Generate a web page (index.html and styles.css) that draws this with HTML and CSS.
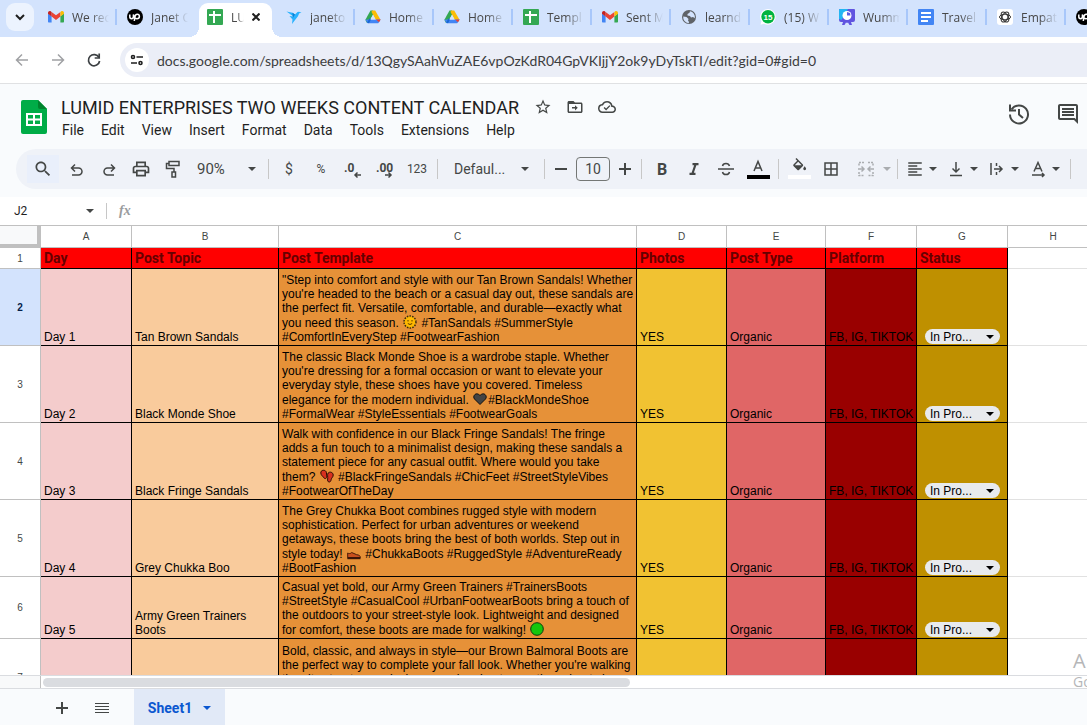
FILE: index.html
```html
<!DOCTYPE html>
<html lang="en">
<head>
	<meta charset="UTF-8">
	<title>LUMID ENTERPRISES TWO WEEKS CONTENT CALENDAR</title>
	<link rel="stylesheet" href="styles.css">
</head>
<body>
	<!-- icons that are used more than once -->
	<svg class="defs" width="0" height="0">
		<symbol id="gmail" viewBox="0 0 16 16">
			<path fill="#4285f4" d="M1 13.5h2.6V7.3L0 4.6v7.9c0 .6.4 1 1 1z"/>
			<path fill="#34a853" d="M12.4 13.5H15c.6 0 1-.4 1-1V4.6l-3.6 2.7z"/>
			<path fill="#ea4335" d="M3.6 7.6V2.9L8 6.2l4.4-3.3v4.7L8 10.9z"/>
			<path fill="#c5221f" d="M0 4v.8l3.6 2.8V2.9l-.9-.6C1.600 1.400 0 2.400 0 4z"/>
			<path fill="#fbbc04" d="M12.400 2.900v4.700L16 4.800V4c0-1.600-1.600-2.600-2.700-1.700z"/>
		</symbol>
		<symbol id="drive" viewBox="0 0 16 16">
			<path fill="#34a853" d="M5.500 1.500h2.600L8 5.800 3.700 13.500 1.500 13.500.4 10.800z"/>
			<path fill="#fbbc04" d="M7 1.500h3.200l5.300 9.200h-4.800L6.500 3z"/>
			<path fill="#4285f4" d="M2.700 10.400h12.900l-2 3.300c-.2.400-.6.600-1 .600H3.400c-.5 0-.9-.2-1.100-.6L.4 10.800z"/>
			<path fill="#1967d2" d="M2 13.500l2.800-4.600 1.200 1.700-2 3.600z"/>
			<path fill="#ea4335" d="M11 10.500h4.600l-1.600 2.800z"/>
			<path fill="#d3e3fd" d="M8 5.800l2.600 4.600H5.400z"/>
		</symbol>
		<symbol id="sheet" viewBox="0 0 16 16">
			<rect width="16" height="16" rx="1" fill="#34a853"/>
			<path fill="#fff" d="M2 5h12v2H8v7H6V7H2zM6 2h2v3H6z"/>
		</symbol>
		<symbol id="upwork" viewBox="0 0 16 16">
			<circle cx="8" cy="8" r="8" fill="#000"/>
			<path fill="none" stroke="#fff" stroke-width="1.500" d="M2.800 5.500v2.300c0 1.200.7 1.900 1.800 1.900s1.800-.7 1.800-1.900V5.500c.5 2 1.600 4.200 3.600 4.200 1.400 0 2.400-1 2.400-2.200s-.9-2.200-2.200-2.200c-1.500 0-2 1.200-2.400 2.900L7.300 12"/>
		</symbol>
	</svg>

	<div class="tabs">
		<button class="tabsearch" aria-label="Search tabs"><svg width="12" height="12" viewBox="0 0 12 12"><path fill="none" stroke="#1f1f1f" stroke-width="2" d="M2 4l4 4 4-4"/></svg></button>
		<div class="tab"><svg class="fav"><use href="#gmail"/></svg><span>We rec</span></div>
		<div class="tab nosep"><svg class="fav"><use href="#upwork"/></svg><span>Janet C</span></div>
		<div class="tab active">
			<svg class="fav"><use href="#sheet"/></svg><span>LU</span>
			<button class="close" aria-label="Close tab"><svg width="8" height="8" viewBox="0 0 8 8"><path stroke="#1f1f1f" stroke-width="2" d="M.5.500l7 7M7.500.500l-7 7"/></svg></button>
		</div>
		<div class="tab"><svg class="fav" viewBox="0 0 16 16"><path fill="#29b2fe" d="M.5 2.500l6 1.200L9 5.500 11.500 3l1.500-.3 2.500 1-2.200.6-1.500 3.200-2 2.500L6 15l.5-4.500L3.500 7l4 .5z"/><path fill="#0b7fd0" d="M6.500 3.700L9 5.500 6.800 9z"/></svg><span>janeto</span></div>
		<div class="tab"><svg class="fav"><use href="#drive"/></svg><span>Home</span></div>
		<div class="tab"><svg class="fav"><use href="#drive"/></svg><span>Home</span></div>
		<div class="tab"><svg class="fav"><use href="#sheet"/></svg><span>Templ</span></div>
		<div class="tab"><svg class="fav"><use href="#gmail"/></svg><span>Sent M</span></div>
		<div class="tab"><svg class="fav" viewBox="0 0 16 16"><circle cx="8" cy="8" r="7" fill="#5f6368"/><path fill="#d3e3fd" d="M2.200 7.500L5.500 8l2 2-.5 1.500 1 1.500-.3 1.200A6 6 0 0 1 2.200 7.500zM9 2.200l-.5 1.500L6.500 5v1.500l2.500.5 1 1.500 2-.5 1.800 1.200A6 6 0 0 0 9 2.200z"/></svg><span>learnd</span></div>
		<div class="tab"><svg class="fav" viewBox="0 0 16 16"><path fill="#fff" d="M8 0a7.800 7.800 0 1 1-3.800 14.700L.5 15.700l1-3.600A7.800 7.800 0 0 1 8 0z"/><circle cx="8" cy="7.800" r="6.700" fill="#00b341"/><text x="8" y="11" class="badge">15</text></svg><span>(15) W</span></div>
		<div class="tab"><svg class="fav" viewBox="0 0 16 16"><path fill="#6054e0" d="M1 0h14a1 1 0 0 1 1 1v10a2 2 0 0 1-2 2h-2l1 3h-2.500L9 13.500 8 14l-1-.5L5.500 16H3l1-3H2a2 2 0 0 1-2-2V1a1 1 0 0 1 1-1z"/><path fill="#23b5f2" d="M1 0h8L2.500 11 0 10V1a1 1 0 0 1 1-1z"/><circle cx="8" cy="6.500" r="4.500" fill="#fff"/><path fill="#5a5ce4" d="M8 6.500V3l3 1 .5 2.500z"/></svg><span>Wumm</span></div>
		<div class="tab"><svg class="fav" viewBox="0 0 16 16"><rect width="16" height="16" rx="1" fill="#4285f4"/><path fill="#fff" d="M3 3h10v2H3zM3 7h10v2H3zM3 11h7v2H3z"/></svg><span>Travel</span></div>
		<div class="tab"><svg class="fav" viewBox="0 0 16 16"><rect width="16" height="16" rx="3" fill="#fff"/><g fill="none" stroke="#333" stroke-width="1"><ellipse cx="8" cy="8" rx="5.500" ry="2.800"/><ellipse cx="8" cy="8" rx="5.500" ry="2.800" transform="rotate(60 8 8)"/><ellipse cx="8" cy="8" rx="5.500" ry="2.800" transform="rotate(120 8 8)"/></g></svg><span>Empat</span></div>
		<div class="tab"><svg class="fav"><use href="#upwork"/></svg></div>
	</div>

	<div class="address">
		<button class="nav" aria-label="Back"><svg width="16" height="16" viewBox="0 0 16 16"><path fill="none" stroke="#a0a1a4" stroke-width="1.500" d="M14 8H3M8 2.500L2.500 8 8 13.500"/></svg></button>
		<button class="nav" aria-label="Forward"><svg width="16" height="16" viewBox="0 0 16 16"><path fill="none" stroke="#a0a1a4" stroke-width="1.500" d="M2 8h11M8 2.500L13.500 8 8 13.500"/></svg></button>
		<button class="nav" aria-label="Reload"><svg width="16" height="16" viewBox="0 0 16 16"><path fill="none" stroke="#3c4043" stroke-width="1.700" d="M13 5.500A5.600 5.600 0 1 0 13.600 9"/><path fill="none" stroke="#3c4043" stroke-width="1.700" d="M13.200 1.500V6H8.700"/></svg></button>
		<div class="omnibox">
			<button class="siteinfo" aria-label="Site information"><svg width="14" height="14" viewBox="0 0 14 14"><g fill="none" stroke="#1f1f1f" stroke-width="1.600"><circle cx="3" cy="4" r="1.500"/><path d="M6.500 4H13M1 10h6"/><circle cx="10.500" cy="10" r="1.500"/></g></svg></button>
			<input type="text" class="url" aria-label="Address" value="docs.google.com/spreadsheets/d/13QgySAahVuZAE6vpOzKdR04GpVKIjjY2ok9yDyTskTI/edit?gid=0#gid=0">
		</div>
	</div>

	<div class="header">
		<svg class="logo" width="26" height="34" viewBox="0 0 26 34"><path fill="#00ac47" d="M2 0h15l9 9v23a2 2 0 0 1-2 2H2a2 2 0 0 1-2-2V2a2 2 0 0 1 2-2z"/><path fill="#00832d" d="M17 0l9 9h-7a2 2 0 0 1-2-2z"/><path fill="#fff" d="M5 13h16v13H5zM7 15v3.500h5V15zm7 0v3.500h5V15zm-7 5.500V24h5v-3.500zm7 0V24h5v-3.500z" fill-rule="evenodd"/></svg>
		<div class="heading">
			<div class="titlerow">
				<input type="text" class="title" aria-label="Rename" value="LUMID ENTERPRISES TWO WEEKS CONTENT CALENDAR">
				<button class="ticon" aria-label="Star"><svg width="18" height="18" viewBox="0 0 24 24"><path d="M22 9.240l-7.190-.620L12 2 9.190 8.630 2 9.240l5.460 4.730L5.820 21 12 17.270 18.180 21l-1.630-7.030L22 9.240zM12 15.400l-3.760 2.270 1-4.280-3.320-2.880 4.380-.380L12 6.100l1.710 4.040 4.380.380-3.320 2.880 1 4.280L12 15.400z"/></svg></button>
				<button class="ticon" aria-label="Move"><svg width="18" height="18" viewBox="0 0 24 24"><path d="M20 6h-8l-2-2H4c-1.100 0-2 .9-2 2v12c0 1.100.9 2 2 2h16c1.100 0 2-.9 2-2V8c0-1.100-.9-2-2-2zm0 12H4V8h16v10z"/><path d="M12 9.500l3.700 3.500-3.700 3.500V14H8v-2h4z"/></svg></button>
				<button class="ticon" aria-label="Document status"><svg width="18" height="18" viewBox="0 0 24 24"><path d="M19.350 10.040A7.490 7.490 0 0 0 12 4C9.110 4 6.600 5.640 5.350 8.040A5.994 5.994 0 0 0 0 14c0 3.310 2.690 6 6 6h13c2.760 0 5-2.240 5-5 0-2.640-2.050-4.780-4.650-4.960zM19 18H6c-2.210 0-4-1.790-4-4 0-2.050 1.530-3.760 3.560-3.970l1.070-.110.5-.950A5.469 5.469 0 0 1 12 6c2.620 0 4.880 1.860 5.390 4.430l.3 1.500 1.530.110A2.980 2.980 0 0 1 22 15c0 1.650-1.350 3-3 3z"/><path d="M10.800 16.500l-3.300-3.300 1.300-1.300 2 2 4.400-4.400 1.300 1.300z"/></svg></button>
			</div>
			<div class="menu">
				<button>File</button>
				<button>Edit</button>
				<button>View</button>
				<button>Insert</button>
				<button>Format</button>
				<button>Data</button>
				<button>Tools</button>
				<button>Extensions</button>
				<button>Help</button>
			</div>
		</div>
		<div class="actions">
			<button aria-label="Version history"><svg width="24" height="24" viewBox="0 0 24 24"><g fill="none" stroke="#444746" stroke-width="2"><path d="M4.500 7.500A9 9 0 1 1 3 12.500"/><path d="M3 2.500V8.500H9"/><path d="M12 7v5.500l4 3.500"/></g></svg></button>
			<button aria-label="Comments"><svg width="24" height="24" viewBox="0 0 24 24"><path fill="#444746" d="M21.990 4c0-1.100-.890-2-1.990-2H4c-1.100 0-2 .9-2 2v12c0 1.100.9 2 2 2h14l4 4-.010-18zM20 4v13.170L18.830 16H4V4h16zM6 12h12v2H6zm0-3h12v2H6zm0-3h12v2H6z"/></svg></button>
		</div>
	</div>

	<div class="toolwrap">
		<div class="toolbar">
			<button class="find" aria-label="Search the menus"><svg width="20" height="20" viewBox="0 0 24 24"><path d="M15.500 14h-.790l-.280-.270C15.410 12.590 16 11.110 16 9.500 16 5.910 13.090 3 9.500 3S3 5.910 3 9.500 5.910 16 9.500 16c1.610 0 3.090-.590 4.230-1.570l.270.280v.790l5 4.990L20.490 19l-4.990-5zm-6 0C7.010 14 5 11.990 5 9.500S7.010 5 9.500 5 14 7.010 14 9.500 11.990 14 9.500 14z"/></svg></button>
			<button aria-label="Undo"><svg class="line" width="18" height="18" viewBox="0 0 18 18"><path d="M4 15h6.500a3.500 3.500 0 0 0 0-7H4M7 4.500L3.500 8 7 11.500"/></svg></button>
			<button aria-label="Redo"><svg class="line" width="18" height="18" viewBox="0 0 18 18"><path d="M14 15H7.500a3.500 3.500 0 0 1 0-7H14M11 4.500L14.500 8 11 11.500"/></svg></button>
			<button aria-label="Print"><svg width="20" height="20" viewBox="0 0 24 24"><path d="M19 8h-1V3H6v5H5c-1.660 0-3 1.340-3 3v6h4v4h12v-4h4v-6c0-1.660-1.340-3-3-3zM8 5h8v3H8V5zm8 12v2H8v-4h8v2zm2-2v-2H6v2H4v-4c0-.550.450-1 1-1h14c.550 0 1 .450 1 1v4h-2z"/></svg></button>
			<button aria-label="Paint format"><svg class="line" width="18" height="18" viewBox="0 0 18 18"><path d="M5 1.500h10v4H5zM5 3.500H2.500v5h7.500V12M8 12h3.500v5H8z"/></svg></button>
			<div class="pick zoom"><select aria-label="Zoom"><option>90%</option></select></div>
			<i class="sep"></i>
			<button aria-label="Format as currency">$</button>
			<button class="pct" aria-label="Format as percent">%</button>
			<button aria-label="Decrease decimal places"><svg width="20" height="20" viewBox="0 0 20 20"><text x="1" y="13" class="dec">.0</text><path class="thin" d="M18 16h-6M14.500 13.500L12 16l2.500 2.500"/></svg></button>
			<button aria-label="Increase decimal places"><svg width="20" height="20" viewBox="0 0 20 20"><text x="1" y="13" class="dec">.00</text><path class="thin" d="M10 16h6M13.500 13.500L16 16l-2.500 2.500"/></svg></button>
			<button class="small" aria-label="More formats">123</button>
			<i class="sep"></i>
			<div class="pick font"><select aria-label="Font"><option>Defaul...</option></select></div>
			<i class="sep"></i>
			<button class="step" aria-label="Decrease font size"><svg width="12" height="12" viewBox="0 0 12 12"><path d="M0 5h12v2H0z"/></svg></button>
			<input type="text" class="size" aria-label="Font size" value="10">
			<button class="step" aria-label="Increase font size"><svg width="12" height="12" viewBox="0 0 12 12"><path d="M0 5h12v2H0zM5 0h2v12H5z"/></svg></button>
			<i class="sep"></i>
			<button class="bold" aria-label="Bold">B</button>
			<button aria-label="Italic"><svg width="18" height="18" viewBox="0 0 24 24"><path d="M10 4v3h2.200l-3.400 10H6v3h8v-3h-2.200l3.400-10H18V4z"/></svg></button>
			<button aria-label="Strikethrough"><svg class="line" width="18" height="18" viewBox="0 0 18 18"><path d="M1 9h16M12.500 6C12 4.300 10.700 3.500 9 3.500S5.800 4.300 5.500 6M5.500 12c.3 1.700 1.700 2.500 3.500 2.500s3.200-.8 3.500-2.500"/></svg></button>
			<button class="color" aria-label="Text color"><svg width="24" height="20" viewBox="0 0 24 20"><path class="thin" d="M8 12L12 2.500 16 12M9.500 9h5"/><path fill="#000" d="M1 16h23v4H1z"/></svg></button>
			<i class="sep"></i>
			<button class="color" aria-label="Fill color"><svg width="24" height="24" viewBox="0 0 24 24"><path fill="#fff" d="M1 18h23v4H1z"/><g transform="translate(4 1) scale(.72)"><path d="M16.560 8.940L7.620 0 6.210 1.410l2.380 2.380-5.150 5.150c-.590.590-.590 1.540 0 2.120l5.500 5.500c.290.290.680.440 1.060.440s.770-.150 1.060-.440l5.500-5.500c.590-.580.590-1.530 0-2.120zM5.210 10L10 5.210 14.790 10H5.210zM19 11.500s-2 2.170-2 3.500c0 1.100.9 2 2 2s2-.9 2-2c0-1.330-2-3.500-2-3.500z"/></g></svg></button>
			<button aria-label="Borders"><svg width="18" height="18" viewBox="0 0 24 24"><path d="M3 3v18h18V3H3zm8 16H5v-6h6v6zm0-8H5V5h6v6zm8 8h-6v-6h6v6zm0-8h-6V5h6v6z"/></svg></button>
			<button class="split wide off" aria-label="Merge cells"><svg class="line" width="18" height="18" viewBox="0 0 18 18"><path stroke-dasharray="2 1" d="M7 2.500H2V6M2 12v3.500h5M11 2.500h5V6M16 12v3.500h-5"/><path d="M1 9h5.500M4.500 6.500L7 9l-2.500 2.500M17 9h-5.500M13.500 6.500L11 9l2.500 2.500"/></svg><b></b></button>
			<i class="sep"></i>
			<button class="split" aria-label="Horizontal align"><svg width="18" height="18" viewBox="0 0 24 24"><path d="M15 15H3v2h12v-2zm0-8H3v2h12V7zM3 13h18v-2H3v2zm0 8h18v-2H3v2zM3 3v2h18V3H3z"/></svg><b></b></button>
			<button class="split" aria-label="Vertical align"><svg class="line" width="18" height="18" viewBox="0 0 18 18"><path d="M3 15.500h12M9 2v10M5.500 8.500L9 12l3.500-3.500"/></svg><b></b></button>
			<button class="split" aria-label="Text wrapping"><svg class="line" width="18" height="18" viewBox="0 0 18 18"><path d="M3 3v12M8.500 3v3M8.500 12v3M6 9h8M11 6l3 3-3 3"/></svg><b></b></button>
			<button class="split" aria-label="Text rotation"><svg class="line" width="18" height="18" viewBox="0 0 18 18"><path d="M5 11.500L9 2.500l4 9M6.500 8.500h5M3 15h12M13 13l2 2-2 2"/></svg><b></b></button>
			<i class="sep"></i>
		</div>
	</div>

	<div class="formula">
		<input type="text" class="namebox" aria-label="Name box" value="J2">
		<b class="arrow"></b>
		<i class="sep"></i>
		<span class="fx">fx</span>
	</div>

	<div class="grid">
		<table>
			<colgroup>
				<col class="w-row"><col class="w-a"><col class="w-b"><col class="w-c"><col class="w-d"><col class="w-e"><col class="w-f"><col class="w-g"><col class="w-h">
			</colgroup>
			<tr class="cols"><th class="corner"></th><th>A</th><th>B</th><th>C</th><th>D</th><th>E</th><th>F</th><th>G</th><th>H</th></tr>
			<tr class="titles"><th>1</th><td>Day</td><td>Post Topic</td><td>Post Template</td><td>Photos</td><td>Post Type</td><td>Platform</td><td>Status</td><td></td></tr>
			<tr class="tall current">
				<th>2</th><td class="day">Day 1</td><td class="topic">Tan Brown Sandals</td>
				<td class="post">"Step into comfort and style with our Tan Brown Sandals! Whether<br>you're headed to the beach or a casual day out, these sandals are<br>the perfect fit. Versatile, comfortable, and durable—exactly what<br>you need this season. <svg class="emo" viewBox="0 0 14 14"><circle cx="7" cy="7" r="6" fill="#f7b500" stroke="#3b2a10" stroke-width="1.500" stroke-dasharray="1.500 1.200"/><circle cx="7" cy="7" r="4.500" fill="#ffb900"/><path fill="none" stroke="#5a3a00" d="M5 5v1.500M9 5v1.500M4.800 8.500q2.200 2 4.400 0"/></svg> #TanSandals #SummerStyle<br>#ComfortInEveryStep #FootwearFashion</td>
				<td class="photos">YES</td><td class="type">Organic</td><td class="platform">FB, IG, TIKTOK</td><td class="status"><div class="chip"><select aria-label="Status"><option>In Pro...</option></select></div></td><td></td>
			</tr>
			<tr class="tall">
				<th>3</th><td class="day">Day 2</td><td class="topic">Black Monde Shoe</td>
				<td class="post">The classic Black Monde Shoe is a wardrobe staple. Whether<br>you're dressing for a formal occasion or want to elevate your<br>everyday style, these shoes have you covered. Timeless<br>elegance for the modern individual. <svg class="emo" viewBox="0 0 14 14"><path fill="#444" stroke="#111" d="M7 12.500L1.500 7C-.5 4.500 2 1 4.800 2 6 2.300 7 3.500 7 3.500S8 2.300 9.200 2C12 1 14.500 4.500 12.500 7z"/></svg>#BlackMondeShoe<br>#FormalWear #StyleEssentials #FootwearGoals</td>
				<td class="photos">YES</td><td class="type">Organic</td><td class="platform">FB, IG, TIKTOK</td><td class="status"><div class="chip"><select aria-label="Status"><option>In Pro...</option></select></div></td><td></td>
			</tr>
			<tr class="tall">
				<th>4</th><td class="day">Day 3</td><td class="topic">Black Fringe Sandals</td>
				<td class="post">Walk with confidence in our Black Fringe Sandals! The fringe<br>adds a fun touch to a minimalist design, making these sandals a<br>statement piece for any casual outfit. Where would you take<br>them? <svg class="emo" viewBox="0 0 14 14"><path fill="#d8301f" stroke="#2a0b05" d="M.8 4C.5 1.200 4.500.3 6 2.500c1 1.800.2 3.500.6 5 .5 2-1.800 2.800-2.800 1.200C3 7.300 1 6.500.8 4z"/><path fill="#d8301f" stroke="#2a0b05" d="M8.200 4c1.500-1.700 5-.8 5 2 0 2.200-1.700 2.700-2 4.500-.3 1.600-1 2.700-2.200 2.500-1.300-.2-1.600-1.500-1.300-3C8 8 7 5.500 8.200 4z"/></svg> #BlackFringeSandals #ChicFeet #StreetStyleVibes<br>#FootwearOfTheDay</td>
				<td class="photos">YES</td><td class="type">Organic</td><td class="platform">FB, IG, TIKTOK</td><td class="status"><div class="chip"><select aria-label="Status"><option>In Pro...</option></select></div></td><td></td>
			</tr>
			<tr class="tall">
				<th>5</th><td class="day">Day 4</td><td class="topic">Grey Chukka Boo</td>
				<td class="post">The Grey Chukka Boot combines rugged style with modern<br>sophistication. Perfect for urban adventures or weekend<br>getaways, these boots bring the best of both worlds. Step out in<br>style today! <svg class="emo" viewBox="0 0 14 14"><path fill="#c8501e" stroke="#4a1c08" d="M.7 7c1 .8 3 .8 4-.5l5 2.200c2.500.3 3.600 1 3.600 2.800H.7z"/><path fill="#3a1608" d="M.3 11.200h13.200v2H.3z"/></svg> #ChukkaBoots #RuggedStyle #AdventureReady<br>#BootFashion</td>
				<td class="photos">YES</td><td class="type">Organic</td><td class="platform">FB, IG, TIKTOK</td><td class="status"><div class="chip"><select aria-label="Status"><option>In Pro...</option></select></div></td><td></td>
			</tr>
			<tr class="mid">
				<th>6</th><td class="day">Day 5</td><td class="topic">Army Green Trainers<br>Boots</td>
				<td class="post">Casual yet bold, our Army Green Trainers #TrainersBoots<br>#StreetStyle #CasualCool #UrbanFootwearBoots bring a touch of<br>the outdoors to your street-style look. Lightweight and designed<br>for comfort, these boots are made for walking! <svg class="emo" viewBox="0 0 14 14"><circle cx="7" cy="7" r="6.300" fill="#16c60c" stroke="#10390d"/></svg></td>
				<td class="photos">YES</td><td class="type">Organic</td><td class="platform">FB, IG, TIKTOK</td><td class="status"><div class="chip"><select aria-label="Status"><option>In Pro...</option></select></div></td><td></td>
			</tr>
			<tr class="tall">
				<th>7</th><td class="day"></td><td class="topic"></td>
				<td class="post">Bold, classic, and always in style—our Brown Balmoral Boots are<br>the perfect way to complete your fall look. Whether you're walking<br>the city streets or enjoying a weekend getaway, these boots have<br><br><br></td>
				<td class="photos"></td><td class="type"></td><td class="platform"></td><td class="status"></td><td></td>
			</tr>
		</table>
	</div>

	<div class="scroll">
		<div class="scrollcorner"></div>
		<div class="thumb"></div>
	</div>

	<div class="sheets">
		<button class="sbtn" aria-label="Add sheet"><svg width="12" height="12" viewBox="0 0 12 12"><path d="M0 5h12v2H0zM5 0h2v12H5z"/></svg></button>
		<button class="sbtn" aria-label="All sheets"><svg width="14" height="10" viewBox="0 0 14 10"><path d="M0 0h14v1H0zM0 3h14v1H0zM0 6h14v1H0zM0 9h14v1H0z"/></svg></button>
		<button class="sheettab">Sheet1<b class="arrow"></b></button>
	</div>

	<div class="activate">
		<p class="big">A</p>
		<p>Go</p>
	</div>
</body>
</html>
```

FILE: styles.css
```css
*{
	padding:0;
	margin:0;
	box-sizing:border-box;
}
body{
	height:100vh;
	display:flex;
	flex-direction:column;
	overflow:hidden;
	position:relative;
	background:#fff;
	font-family:Roboto, "Liberation Sans", sans-serif;
	color:#1f1f1f;
}
button, input, select{
	border:0;
	background:none;
	font-family:inherit;
	color:inherit;
	outline:none;
}
button{
	display:flex;
	align-items:center;
	justify-content:center;
	flex:none;
}
svg{
	flex:none;
}
.defs{
	position:absolute;
}

/* browser tabs */
.tabs{
	display:flex;
	height:37px;
	flex:none;
	background:#d3e3fd;
	padding-left:6px;
	overflow:hidden;
}
.tabsearch{
	width:28px;
	height:28px;
	margin:3px 4px 0 0;
	border-radius:9px;
	background:#ecf3fe;
}
.tab{
	width:79px;
	height:34px;
	flex:none;
	display:flex;
	align-items:center;
	padding:0 8px 0 10px;
	position:relative;
	font-family:"Open Sans", sans-serif;
	font-size:12px;
	color:#474747;
}
.tab::after{
	content:"";
	position:absolute;
	right:0;
	top:9px;
	width:2px;
	height:16px;
	background:#a8c7fa;
}
.tab.nosep::after{
	display:none;
}
.fav{
	width:16px;
	height:16px;
	margin-right:8px;
}
.tab span{
	flex:1;
	overflow:hidden;
	white-space:nowrap;
	-webkit-mask-image:linear-gradient(to right, #000 50%, transparent);
	mask-image:linear-gradient(to right, #000 50%, transparent);
}
.tab.active{
	width:73px;
	height:34px;
	margin:3px 4px 0 3px;
	padding:0 8px 6px;
	background:#fff;
	border-radius:9px 9px 0 0;
}
.tab.active::before, .tab.active::after{
	content:"";
	position:absolute;
	top:auto;
	bottom:0;
	width:10px;
	height:10px;
}
.tab.active::before{
	left:-10px;
	background:radial-gradient(circle at 0 0, #d3e3fd 10px, #fff 10px);
}
.tab.active::after{
	right:-10px;
	background:radial-gradient(circle at 100% 0, #d3e3fd 10px, #fff 10px);
}
.close{
	width:16px;
	height:16px;
	margin-left:4px;
}
.badge{
	font:bold 8px "Liberation Sans", sans-serif;
	fill:#fff;
	text-anchor:middle;
}

/* address bar */
.address{
	display:flex;
	align-items:center;
	height:47px;
	flex:none;
	padding:0 0 0 4px;
	border-bottom:1px solid #e0e1e3;
}
.nav{
	width:36px;
	height:34px;
}
.omnibox{
	flex:1;
	display:flex;
	align-items:center;
	height:34px;
	margin-left:8px;
	padding-left:5px;
	border-radius:17px 0 0 17px;
	background:#ebeef7;
}
.siteinfo{
	width:24px;
	height:24px;
	border-radius:12px;
	background:#fff;
}
.url{
	flex:1;
	margin-left:8px;
	font-family:Lato, sans-serif;
	font-size:14px;
	color:#3c3d40;
}

/* document header */
.header{
	display:flex;
	height:65px;
	flex:none;
	padding:12px 7px 0 21px;
	background:#f9fbfd;
}
.logo{
	margin-top:4px;
}
.heading{
	margin-left:13px;
}
.titlerow{
	display:flex;
	align-items:center;
	height:22px;
}
.title{
	width:467px;
	padding-left:1px;
	font-size:18px;
}
.ticon{
	width:32px;
	height:22px;
}
.ticon svg, .toolbar svg, .sheets svg{
	fill:#444746;
}
.menu{
	display:flex;
	gap:17px;
	padding-left:2px;
}
.menu button{
	height:24px;
	font-size:14px;
}
.actions{
	display:flex;
	gap:25px;
	margin-left:auto;
	height:36px;
}

/* toolbar */
.toolwrap{
	height:48px;
	flex:none;
	padding-left:16px;
	background:#f9fbfd;
	overflow:hidden;
}
.toolbar{
	display:flex;
	align-items:center;
	height:40px;
	padding-left:11px;
	border-radius:20px 0 0 20px;
	background:#eff2f8;
	color:#444746;
}
.toolbar button{
	width:32px;
	height:28px;
	font-size:14px;
}
.toolbar .find{
	margin-right:2px;
	background:#e9effb;
}
.toolbar .small, .toolbar .pct{
	font-size:12px;
}
.toolbar .step{
	width:24px;
}
.toolbar .bold{
	font-size:16px;
	font-weight:bold;
}
.toolbar .line{
	fill:none;
	stroke:#444746;
	stroke-width:1.5;
}
.toolbar .thin{
	fill:none;
	stroke:#444746;
	stroke-width:1.5;
}
.dec{
	font:bold 12px Roboto, sans-serif;
}
.sep{
	flex:none;
	width:1px;
	height:20px;
	margin:0 4px;
	background:#c7c7c7;
}
.pick, .chip{
	position:relative;
	flex:none;
}
.pick select, .chip select{
	width:100%;
	appearance:none;
	-webkit-appearance:none;
}
.pick select{
	height:28px;
	font-size:14px;
}
.pick::after, .chip::after{
	content:"";
	position:absolute;
	top:50%;
	margin-top:-2px;
	border:4px solid transparent;
	border-top-color:#444746;
	border-bottom:0;
	pointer-events:none;
}
.pick::after{
	right:8px;
}
.zoom{
	width:75px;
}
.zoom select{
	padding-left:8px;
	font-size:15px;
}
.font{
	width:98px;
}
.font::after{
	right:11px;
}
.font select{
	padding-left:12px;
}
.size{
	width:34px;
	height:24px;
	margin:0 3px;
	border:1px solid #747775;
	border-radius:4px;
	text-align:center;
	font-size:14px;
}
.toolbar .split{
	width:41px;
	justify-content:flex-start;
	padding-left:4px;
	gap:5px;
}
.toolbar .wide{
	width:46px;
	padding-left:10px;
	gap:8px;
}
.split b, .arrow{
	border:4px solid transparent;
	border-top-color:#444746;
	border-bottom:0;
}
.off{
	opacity:.4;
}

/* formula bar */
.formula{
	display:flex;
	align-items:center;
	height:29px;
	flex:none;
	padding-left:14px;
	border-bottom:1px solid #c0c0c0;
}
.namebox{
	width:72px;
	font-size:12px;
}
.formula .sep{
	height:16px;
	margin:0 12px 0 12px;
}
.fx{
	font:italic bold 14px "Liberation Serif", serif;
	color:#9a9c9e;
}

/* cells */
.grid{
	flex:1;
	min-height:0;
	overflow:hidden;
}
table{
	width:1099px;
	table-layout:fixed;
	border-collapse:separate;
	border-spacing:0;
}
.w-row{ width:41px; }
.w-a{ width:91px; }
.w-b{ width:147px; }
.w-c{ width:358px; }
.w-d{ width:90px; }
.w-e{ width:99px; }
.w-f{ width:91px; }
.w-g{ width:91px; }
.w-h{ width:91px; }
th{
	border-right:1px solid #c0c0c0;
	border-bottom:1px solid #c0c0c0;
	font-family:"Liberation Sans", Arial, sans-serif;
	font-size:10px;
	font-weight:normal;
	color:#444746;
	text-align:center;
}
.corner{
	background:#f8f9fa;
	border-right:4px solid #c0c0c0;
	border-bottom:4px solid #c0c0c0;
}
td{
	padding:0 0 1px 3px;
	border-right:1px solid #000;
	border-bottom:1px solid #000;
	font-family:"Liberation Sans", Arial, sans-serif;
	font-size:12px;
	line-height:14px;
	vertical-align:bottom;
	white-space:nowrap;
	color:#000;
}
td:last-child{
	border-color:#e1e1e1;
}
.cols{
	height:22px;
}
.titles{
	height:21px;
}
.tall{
	height:77px;
}
.mid{
	height:62px;
}
.titles td{
	background:#f00;
	font-family:Roboto, sans-serif;
	font-size:14px;
	font-weight:bold;
	color:#600;
	vertical-align:middle;
}
.titles td:last-child{
	background:#fff;
}
.current th{
	background:#d3e3fd;
	font-weight:bold;
	color:#041e49;
}
.day{
	background:#f4cccc;
}
.topic{
	background:#f9cb9c;
}
.post{
	background:#e69138;
}
.photos{
	background:#f1c232;
}
.type{
	background:#e06666;
}
.platform{
	background:#900;
}
.status{
	background:#bf9000;
	padding-left:8px;
}
.emo{
	width:14px;
	height:14px;
	vertical-align:-2px;
	margin:0 1px;
}
.chip{
	width:75px;
	height:15px;
	border-radius:8px;
	background:#e8eaed;
}
.chip select{
	display:block;
	height:15px;
	padding-left:5px;
	font-size:12px;
	color:#000;
}
.chip::after{
	right:6px;
	border-top-color:#000;
}

/* horizontal scrollbar */
.scroll{
	display:flex;
	align-items:center;
	height:14px;
	flex:none;
	border-top:1px solid #dadce0;
	border-bottom:1px solid #dadce0;
}
.scrollcorner{
	width:41px;
	height:12px;
	border-right:1px solid #c0c0c0;
	background:#f8f9fa;
}
.thumb{
	width:54%;
	height:9px;
	margin-left:2px;
	border-radius:5px;
	background:#dadce0;
}

/* sheet tabs */
.sheets{
	display:flex;
	height:36px;
	flex:none;
	padding-left:42px;
	background:#f9fbfd;
}
.sbtn{
	width:40px;
	height:38px;
}
.sheettab{
	width:91px;
	height:38px;
	margin-left:12px;
	gap:11px;
	background:#e1e9f7;
	font-size:14px;
	font-weight:bold;
	color:#0b57d0;
}
.sheettab .arrow{
	border-top-color:#0b57d0;
}
.activate{
	position:absolute;
	left:1073px;
	bottom:34px;
	font-family:"Open Sans", sans-serif;
	font-size:14px;
	line-height:18px;
	color:#b5b6b8;
}
.activate .big{
	font-size:20px;
	line-height:25px;
}
```
